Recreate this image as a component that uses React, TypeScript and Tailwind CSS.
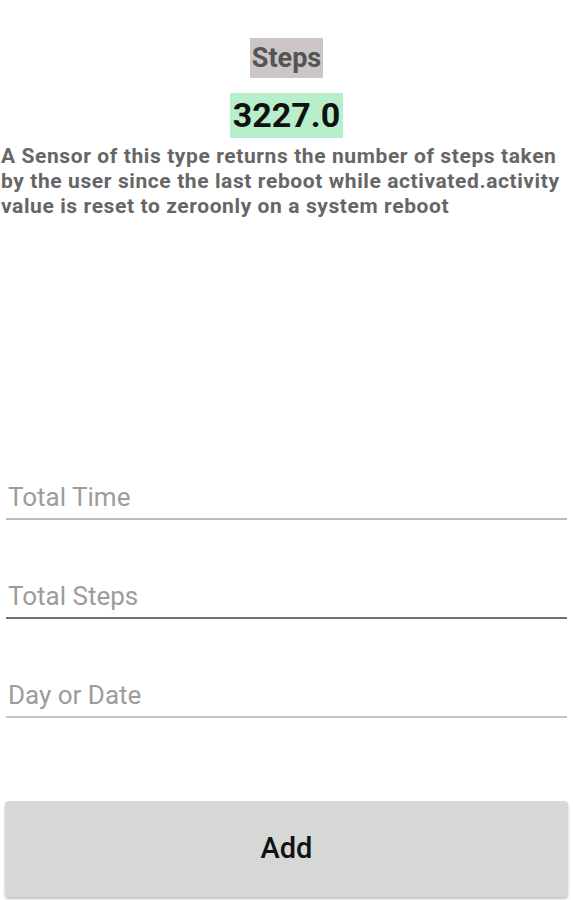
import React, { useState } from 'react';

export default function App() {
  const [totalTime, setTotalTime] = useState('');
  const [totalSteps, setTotalSteps] = useState('');
  const [day, setDay] = useState('');

  const font = { fontFamily: 'Roboto, "Noto Sans", sans-serif' };

  return (
    <div className="min-h-[900px] w-[573px] bg-white flex flex-col" style={font}>
      <div className="flex flex-col items-center pt-[38px]">
        <span className="bg-[#cbc5c5] text-[#545454] font-bold text-[27px] leading-[40px] px-[2px]">Steps</span>
        <span className="mt-[15px] bg-[#b6efc9] text-[#111] font-bold text-[34px] leading-[45px] px-[3px]">3227.0</span>
      </div>
      <p className="mt-[6px] px-[1px] text-[#666] font-bold text-[21px] tracking-[0.6px] leading-[25px]">
        A Sensor of this type returns the number of steps taken by the user since the last reboot while activated.activity value is reset to zeroonly on a system reboot
      </p>

      <div className="mt-[263px] px-[6px] flex flex-col gap-[61px]">
        <div className="border-b-2 border-[#bdbdbd] pb-[5px]">
          <input value={totalTime} onChange={e => setTotalTime(e.target.value)} placeholder="Total Time" className="w-full px-[2px] text-[26px] leading-[30px] text-[#333] placeholder:text-[#9c9c9c] outline-none" />
        </div>
        <div className="border-b-2 border-[#6f6f6f] pb-[5px]">
          <input value={totalSteps} onChange={e => setTotalSteps(e.target.value)} placeholder="Total Steps" className="w-full px-[2px] text-[26px] leading-[30px] text-[#333] placeholder:text-[#9c9c9c] outline-none" />
        </div>
        <div className="border-b-2 border-[#c4c4c4] pb-[5px]">
          <input value={day} onChange={e => setDay(e.target.value)} placeholder="Day or Date" className="w-full px-[2px] text-[26px] leading-[30px] text-[#333] placeholder:text-[#9c9c9c] outline-none" />
        </div>
      </div>

      <div className="mt-[83px] px-[5px]">
        <button type="button" className="w-full h-[96px] rounded-[4px] bg-[#d6d8d8] shadow-[0_2px_3px_rgba(0,0,0,0.25)] text-[29px] font-medium text-[#111]">
          Add
        </button>
      </div>
    </div>
  );
}
